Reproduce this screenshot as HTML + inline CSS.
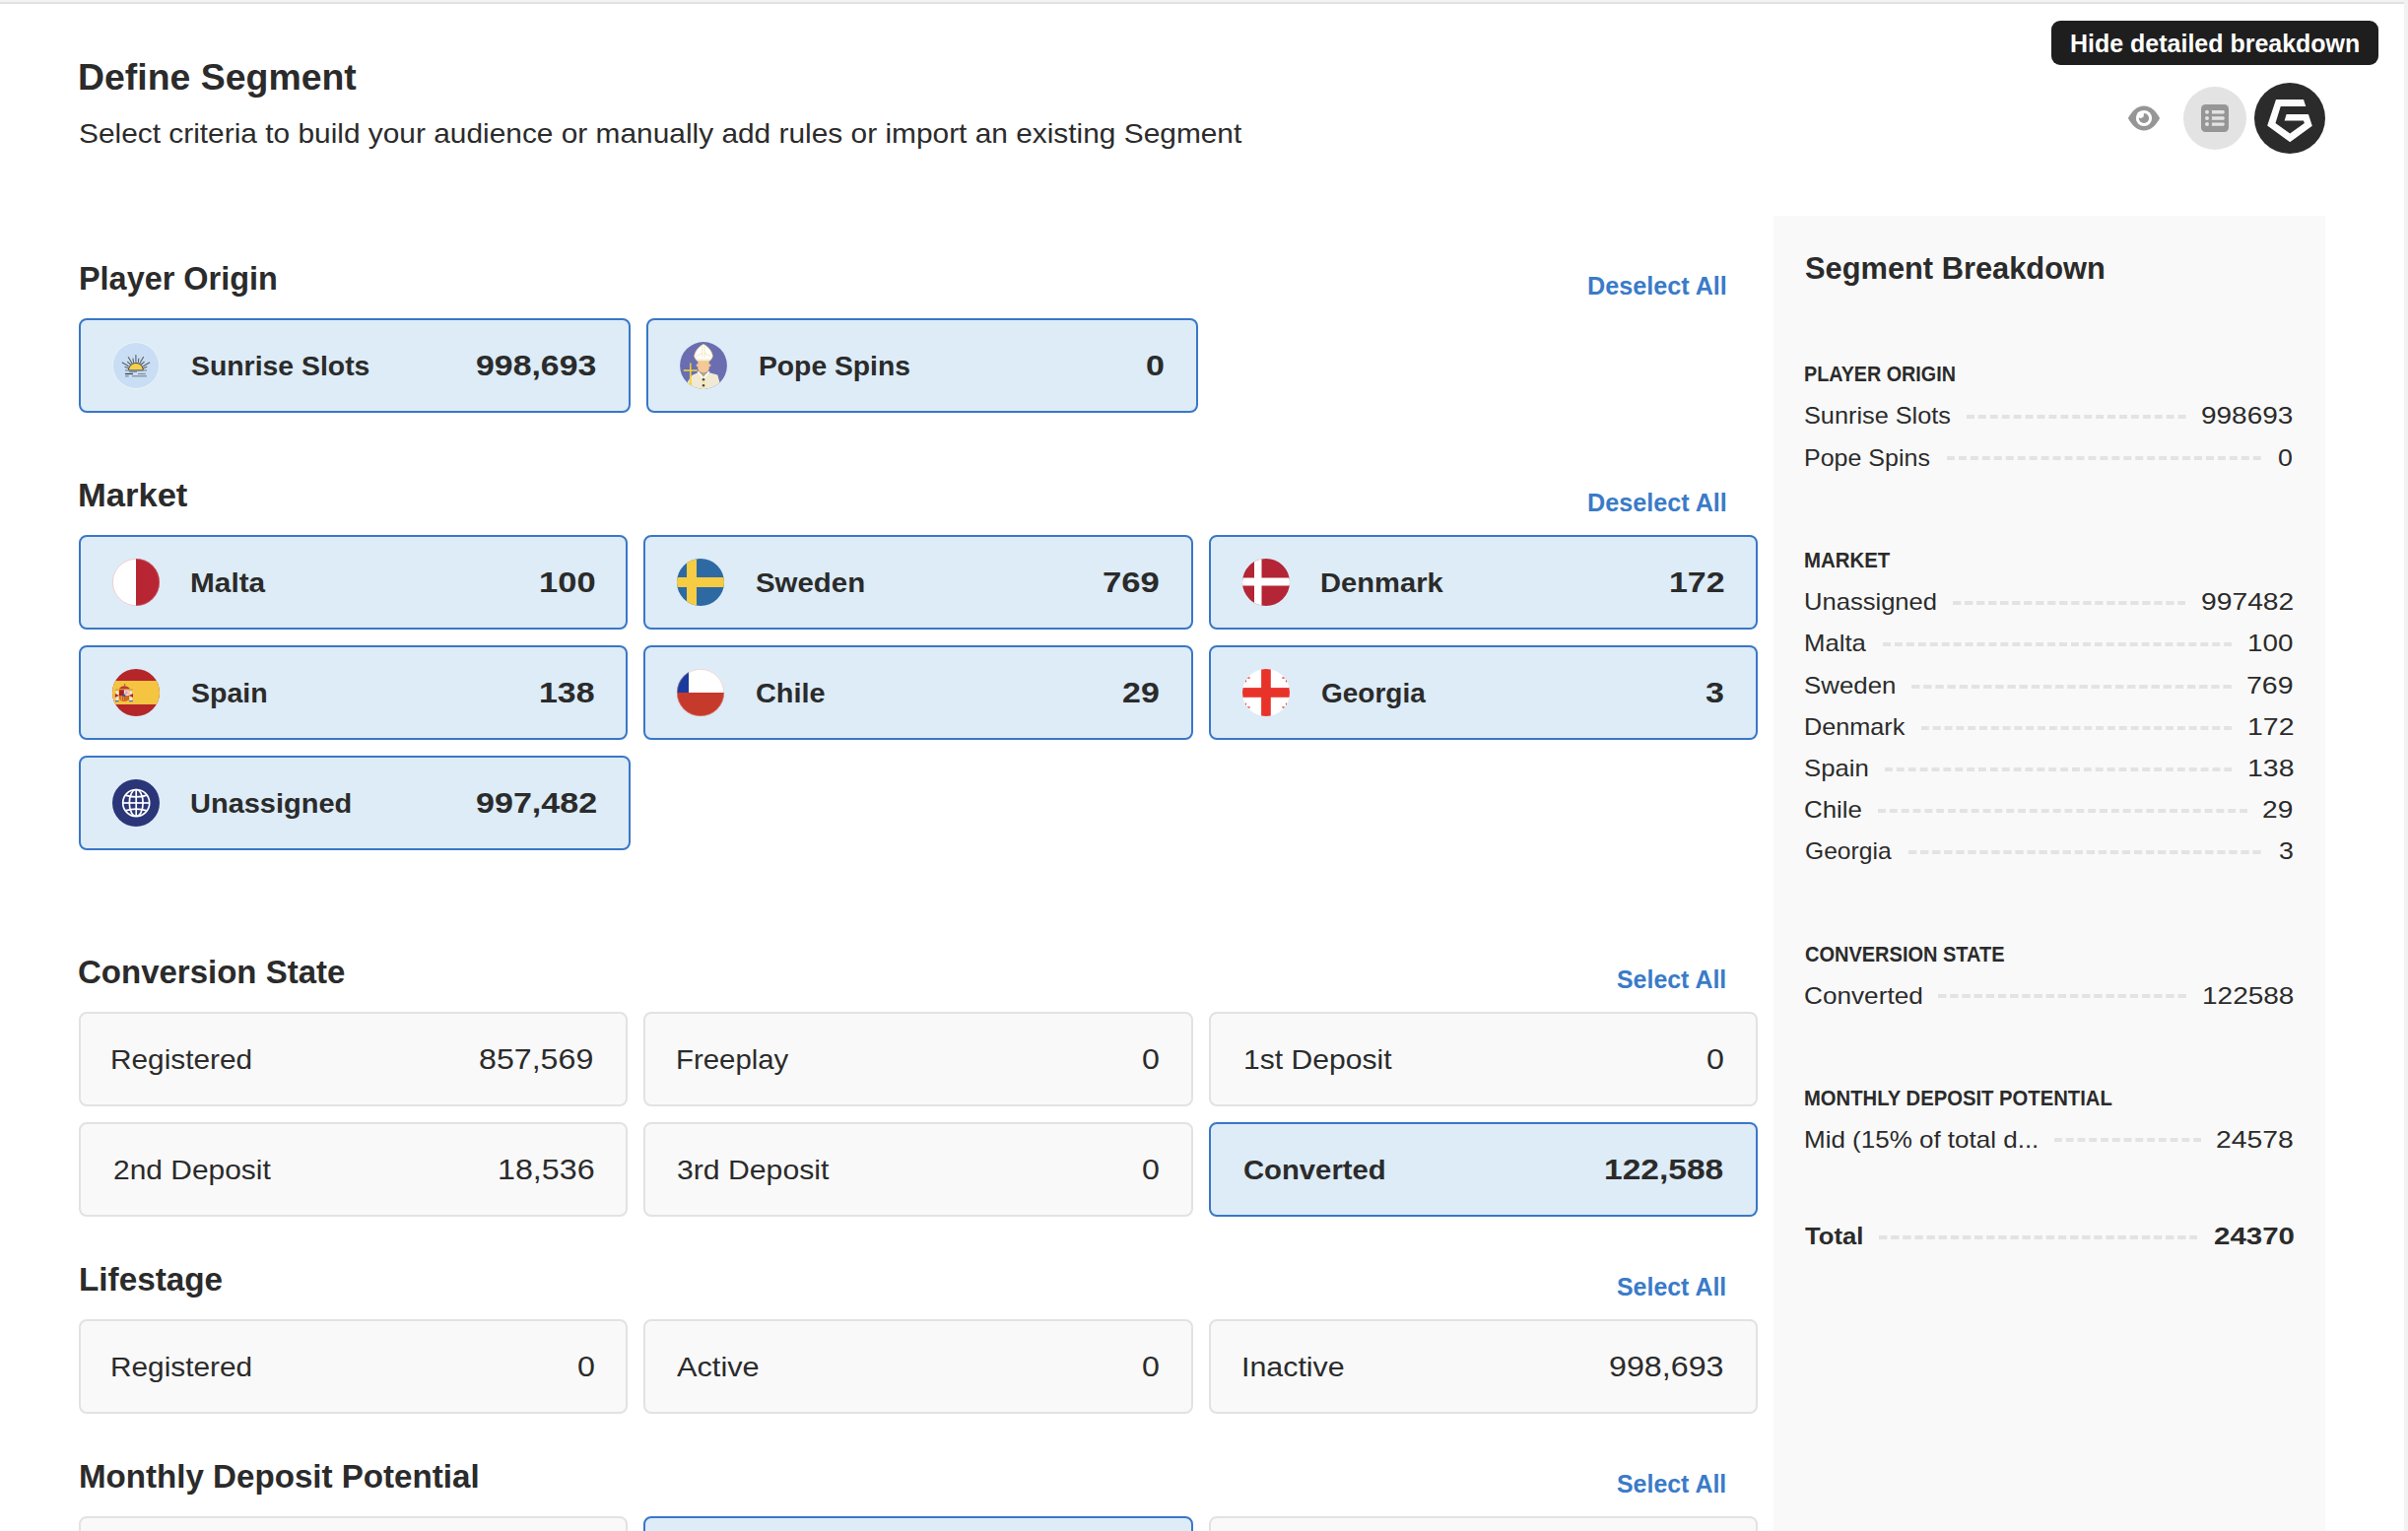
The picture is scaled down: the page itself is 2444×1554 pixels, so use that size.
<!DOCTYPE html>
<html><head><meta charset="utf-8"><title>Define Segment</title>
<style>
html,body{margin:0;padding:0;background:#ffffff;}
body{width:2444px;height:1554px;overflow:hidden;position:relative;font-family:"Liberation Sans", sans-serif;color:#2b2b2b;}
.t{position:absolute;white-space:nowrap;}
</style></head><body>
<div style="position:absolute;left:0px;top:0px;width:2444px;height:2px;box-sizing:border-box;background:#f3f3f3"></div>
<div style="position:absolute;left:0px;top:2px;width:2440px;height:2px;box-sizing:border-box;background:#e1e1e1"></div>
<div style="position:absolute;left:2440px;top:0px;width:4px;height:1554px;box-sizing:border-box;background:#f2f2f2"></div>
<div style="position:absolute;left:2082px;top:21px;width:332px;height:45px;box-sizing:border-box;background:#1e1e1e;border-radius:9px"></div>
<svg style="position:absolute;left:2160px;top:107px;overflow:visible" width="32" height="26" viewBox="0 0 32 26">
<path d="M-0.1 13 C4 5.6 9 0.5 16 0.5 C23 0.5 28 5.6 32.1 13 C28 20.4 23 25.4 16 25.4 C9 25.4 4 20.4 -0.1 13 Z" fill="#969696"/>
<circle cx="16" cy="13" r="8.1" fill="#ffffff"/>
<circle cx="16" cy="13" r="5.1" fill="#969696"/>
<circle cx="12.6" cy="9.6" r="3.3" fill="#ffffff"/>
</svg>
<div style="position:absolute;left:2216px;top:88px;width:64px;height:64px;box-sizing:border-box;background:#e3e3e3;border-radius:50%"></div>
<svg style="position:absolute;left:2234px;top:106px" width="28" height="28" viewBox="0 0 28 28">
<rect x="0" y="0" width="28" height="28" rx="4.5" fill="#969696"/>
<circle cx="6" cy="7.8" r="2" fill="#e3e3e3"/><circle cx="6" cy="14" r="2" fill="#e3e3e3"/><circle cx="6" cy="20.1" r="2" fill="#e3e3e3"/>
<path d="M10.6 6.1 H23 L24 7.8 L23 9.5 H10.6 L11.2 7.8 Z" fill="#e3e3e3"/>
<path d="M10.6 12.3 H23 L24 14 L23 15.7 H10.6 L11.2 14 Z" fill="#e3e3e3"/>
<path d="M10.6 18.4 H23 L24 20.1 L23 21.8 H10.6 L11.2 20.1 Z" fill="#e3e3e3"/>
</svg>
<svg style="position:absolute;left:2288px;top:84px" width="72" height="72" viewBox="0 0 72 72">
<circle cx="36" cy="36" r="36" fill="#2b2b2b"/>
<path d="M22 17 L50 17 L52.3 24.1 L26.75 24.1 L21.5 40.9 L36.2 51.4 L50.9 40.9 L49.9 38.5 L30.6 38.5 L32.6 32 L54.95 32 L58.8 43.8 L36.2 60.3 L13.2 43.5 Z" fill="#fcfcfc"/>
</svg>
<div style="position:absolute;left:1800px;top:219px;width:560px;height:1335px;box-sizing:border-box;background:#f9f9f9"></div>
<div style="position:absolute;left:1996.00px;top:421.20px;width:222.60px;height:4px;background-image:linear-gradient(to right,#e3e3e3 0,#e3e3e3 7.926px,transparent 7.926px);background-size:11.926px 4px;background-repeat:repeat-x"></div>
<div style="position:absolute;left:1975.70px;top:463.10px;width:318.90px;height:4px;background-image:linear-gradient(to right,#e3e3e3 0,#e3e3e3 7.959px,transparent 7.959px);background-size:11.959px 4px;background-repeat:repeat-x"></div>
<div style="position:absolute;left:1981.70px;top:609.60px;width:236.60px;height:4px;background-image:linear-gradient(to right,#e3e3e3 0,#e3e3e3 8.030px,transparent 8.030px);background-size:12.030px 4px;background-repeat:repeat-x"></div>
<div style="position:absolute;left:1910.70px;top:651.60px;width:354.60px;height:4px;background-image:linear-gradient(to right,#e3e3e3 0,#e3e3e3 7.953px,transparent 7.953px);background-size:11.953px 4px;background-repeat:repeat-x"></div>
<div style="position:absolute;left:1940.00px;top:694.60px;width:324.80px;height:4px;background-image:linear-gradient(to right,#e3e3e3 0,#e3e3e3 8.178px,transparent 8.178px);background-size:12.178px 4px;background-repeat:repeat-x"></div>
<div style="position:absolute;left:1950.30px;top:736.60px;width:315.00px;height:4px;background-image:linear-gradient(to right,#e3e3e3 0,#e3e3e3 7.815px,transparent 7.815px);background-size:11.815px 4px;background-repeat:repeat-x"></div>
<div style="position:absolute;left:1912.60px;top:778.60px;width:352.70px;height:4px;background-image:linear-gradient(to right,#e3e3e3 0,#e3e3e3 7.890px,transparent 7.890px);background-size:11.890px 4px;background-repeat:repeat-x"></div>
<div style="position:absolute;left:1905.70px;top:820.60px;width:375.10px;height:4px;background-image:linear-gradient(to right,#e3e3e3 0,#e3e3e3 7.847px,transparent 7.847px);background-size:11.847px 4px;background-repeat:repeat-x"></div>
<div style="position:absolute;left:1937.10px;top:862.60px;width:357.60px;height:4px;background-image:linear-gradient(to right,#e3e3e3 0,#e3e3e3 8.053px,transparent 8.053px);background-size:12.053px 4px;background-repeat:repeat-x"></div>
<div style="position:absolute;left:1967.30px;top:1009.20px;width:251.80px;height:4px;background-image:linear-gradient(to right,#e3e3e3 0,#e3e3e3 8.181px,transparent 8.181px);background-size:12.181px 4px;background-repeat:repeat-x"></div>
<div style="position:absolute;left:2084.80px;top:1155.00px;width:149.10px;height:4px;background-image:linear-gradient(to right,#e3e3e3 0,#e3e3e3 7.777px,transparent 7.777px);background-size:11.777px 4px;background-repeat:repeat-x"></div>
<div style="position:absolute;left:1906.90px;top:1254.00px;width:323.40px;height:4px;background-image:linear-gradient(to right,#e3e3e3 0,#e3e3e3 8.126px,transparent 8.126px);background-size:12.126px 4px;background-repeat:repeat-x"></div>
<div style="position:absolute;left:80px;top:323px;width:560px;height:96px;box-sizing:border-box;background:#ddecf7;border:2px solid #3a77c6;border-radius:8px"></div>
<div style="position:absolute;left:114px;top:347px;width:48px;height:48px"><svg width="48" height="48" viewBox="0 0 48 48"><circle cx="24" cy="24" r="24" fill="#e9f1f9"/><circle cx="24" cy="24" r="23.1" fill="#c9def4"/>
<g stroke="#56606a" stroke-width="1.1" stroke-linecap="round">
<line x1="23.9" y1="13.6" x2="23.9" y2="20"/><line x1="16.3" y1="15.5" x2="19.8" y2="21.5"/><line x1="31.5" y1="15.5" x2="28" y2="21.5"/>
<line x1="10.1" y1="21.1" x2="16.2" y2="24.6"/><line x1="37.7" y1="21.1" x2="31.6" y2="24.6"/>
<line x1="15.5" y1="20.4" x2="18.5" y2="23"/><line x1="32.3" y1="20.4" x2="29.3" y2="23"/>
<line x1="21" y1="17" x2="21.5" y2="20.5"/><line x1="26.8" y1="17" x2="26.3" y2="20.5"/>
<line x1="13" y1="25.4" x2="16" y2="26.4"/><line x1="34.8" y1="25.4" x2="31.8" y2="26.4"/>
</g>
<path d="M16.4 28.9 A7.5 7.5 0 0 1 31.4 28.9 Z" fill="#f6cf4c" stroke="#2f2f2f" stroke-width="0.9"/>
<g stroke="#7d8a96" stroke-width="1.2"><line x1="13" y1="28.9" x2="35" y2="28.9"/><line x1="17.3" y1="30.4" x2="25" y2="30.4"/>
<line x1="13" y1="32.5" x2="21" y2="32.5" stroke="#3b4148"/><line x1="26" y1="32.5" x2="33.8" y2="32.5"/>
<line x1="13" y1="34.8" x2="16.7" y2="34.8"/><line x1="20" y1="34.8" x2="35" y2="34.8"/></g></svg></div>
<div style="position:absolute;left:656px;top:323px;width:560px;height:96px;box-sizing:border-box;background:#ddecf7;border:2px solid #3a77c6;border-radius:8px"></div>
<div style="position:absolute;left:690px;top:347px;width:48px;height:48px"><svg width="48" height="48" viewBox="0 0 48 48"><defs><clipPath id="pc"><circle cx="24" cy="24" r="23.9"/></clipPath></defs>
<circle cx="24" cy="24" r="23.9" fill="#6a6eb0"/>
<g clip-path="url(#pc)">
<path d="M7.6 41 L12.2 34 L18.2 31.2 L24 33 L30 31.2 L38.3 33.6 L40.4 41 L42 50 L6 50 Z" fill="#f0ead3"/>
<path d="M17.6 30.6 L24 38.2 L30.4 30.6 L29.2 29.6 L24 35.6 L18.8 29.6 Z" fill="#ffffff"/>
<path d="M20.6 31.4 L27.4 31.4 L24 35.8 Z" fill="#b5a87c"/>
<rect x="22.2" y="36.4" width="3.6" height="13" fill="#f3e7b8"/>
<circle cx="24" cy="38.3" r="1.25" fill="#4a4a4a"/><circle cx="24" cy="44.3" r="1.25" fill="#4a4a4a"/>
<circle cx="18.1" cy="23.8" r="1.6" fill="#f0c08c"/><circle cx="29.9" cy="23.8" r="1.6" fill="#f0c08c"/>
<path d="M18.3 18.6 L29.7 18.6 L29.7 27.5 Q28.5 31.6 24 31.6 Q19.5 31.6 18.3 27.5 Z" fill="#f4c897"/>
<path d="M24 2.2 C28.5 4.6 32.6 9 33.4 14.3 C33 16.6 31.6 18.6 30.2 19.4 L17.8 19.4 C16.4 18.6 15 16.6 14.6 14.3 C15.4 9 19.5 4.6 24 2.2 Z" fill="#ffffff" stroke="#e5c75a" stroke-width="0.55"/>
<path d="M22.8 3.2 L22.8 15.6 M25.2 3.2 L25.2 15.6 M16.3 14.8 L22.8 11.2 M31.7 14.8 L25.2 11.2 M17 18 L31 18" stroke="#ead58a" stroke-width="0.55" fill="none"/>
<path d="M10.1 21.6 Q10.8 21.2 11.5 21.6 L11.7 40 L12.3 43.8 L9.3 43.8 L9.9 40 Z" fill="#f2d23c"/>
<path d="M3.5 28.9 Q4.2 27.8 6 28.2 L16.2 28.2 Q17.9 27.8 17.9 28.9 Q17.9 30 16.2 29.7 L6 29.7 Q4.2 30 3.5 28.9 Z" fill="#f5d63c"/>
</g></svg></div>
<div style="position:absolute;left:80px;top:543px;width:557px;height:96px;box-sizing:border-box;background:#ddecf7;border:2px solid #3a77c6;border-radius:8px"></div>
<div style="position:absolute;left:114px;top:567px;width:48px;height:48px"><svg width="48" height="48" viewBox="0 0 48 48"><defs><clipPath id="mc"><circle cx="24" cy="24" r="24"/></clipPath></defs><g clip-path="url(#mc)"><rect width="24" height="48" fill="#ffffff"/><rect x="24" width="24" height="48" fill="#b82633"/></g><circle cx="24" cy="24" r="23.6" fill="none" stroke="#d98a90" stroke-width="0.7" stroke-opacity="0.6"/></svg></div>
<div style="position:absolute;left:653px;top:543px;width:558px;height:96px;box-sizing:border-box;background:#ddecf7;border:2px solid #3a77c6;border-radius:8px"></div>
<div style="position:absolute;left:687px;top:567px;width:48px;height:48px"><svg width="48" height="48" viewBox="0 0 48 48"><defs><clipPath id="sc"><circle cx="24" cy="24" r="24"/></clipPath></defs><g clip-path="url(#sc)"><rect width="48" height="48" fill="#2d6aa4"/><rect x="10" width="10" height="48" fill="#f5cc43"/><rect y="19" width="48" height="10" fill="#f5cc43"/></g></svg></div>
<div style="position:absolute;left:1227px;top:543px;width:557px;height:96px;box-sizing:border-box;background:#ddecf7;border:2px solid #3a77c6;border-radius:8px"></div>
<div style="position:absolute;left:1261px;top:567px;width:48px;height:48px"><svg width="48" height="48" viewBox="0 0 48 48"><defs><clipPath id="dc"><circle cx="24" cy="24" r="24"/></clipPath></defs><g clip-path="url(#dc)"><rect width="48" height="48" fill="#b42535"/><rect x="12" width="7.5" height="48" fill="#ffffff"/><rect y="19.5" width="48" height="8" fill="#ffffff"/></g></svg></div>
<div style="position:absolute;left:80px;top:655px;width:557px;height:96px;box-sizing:border-box;background:#ddecf7;border:2px solid #3a77c6;border-radius:8px"></div>
<div style="position:absolute;left:114px;top:679px;width:48px;height:48px"><svg width="48" height="48" viewBox="0 0 48 48"><defs><clipPath id="spc"><circle cx="24" cy="24" r="24"/></clipPath></defs><g clip-path="url(#spc)"><rect width="48" height="48" fill="#b52629"/><rect y="12" width="48" height="24" fill="#f5c542"/>
<path d="M7.2 19.4 Q12 15 17.6 19.4 L17 21 L7.8 21 Z" fill="#c0392b"/><rect x="7.6" y="20.2" width="10" height="1.2" fill="#d9a441"/><rect x="12" y="15" width="1.2" height="2" fill="#8a7a4a"/>
<path d="M7 21.4 H16.8 V29.5 Q16.8 32.7 11.9 32.7 Q7 32.7 7 29.5 Z" fill="#c7352a"/>
<rect x="7" y="21.4" width="4.9" height="5.6" fill="#a8231f"/><rect x="11.9" y="21.4" width="4.9" height="5.6" fill="#f1e4e0"/><rect x="13.2" y="22.4" width="2.4" height="3.4" fill="#e69ab2"/>
<rect x="7.6" y="27.2" width="0.9" height="5" fill="#e8b53a"/><rect x="9.2" y="27.2" width="0.9" height="5" fill="#e8b53a"/><rect x="10.8" y="27.2" width="0.9" height="5" fill="#e8b53a"/>
<rect x="12.2" y="27" width="4.4" height="5" fill="#d2691e"/><ellipse cx="12" cy="26.8" rx="1.4" ry="1.5" fill="#2d5fb0"/>
<rect x="3.6" y="22" width="2.6" height="10" fill="#ede6dc"/><rect x="3" y="20.3" width="3.6" height="1.8" fill="#d9a441"/><path d="M2.8 25 L7 27 L2.8 29 Z" fill="#b52629"/><rect x="3" y="32" width="3.6" height="1.2" fill="#3b6cc0"/>
<rect x="17.6" y="22" width="2.6" height="10" fill="#ede6dc"/><rect x="17.2" y="20.3" width="3.6" height="1.8" fill="#d9a441"/><path d="M21 25 L16.8 27 L21 29 Z" fill="#b52629"/><rect x="17.2" y="32" width="3.6" height="1.2" fill="#3b6cc0"/>
</g></svg></div>
<div style="position:absolute;left:653px;top:655px;width:558px;height:96px;box-sizing:border-box;background:#ddecf7;border:2px solid #3a77c6;border-radius:8px"></div>
<div style="position:absolute;left:687px;top:679px;width:48px;height:48px"><svg width="48" height="48" viewBox="0 0 48 48"><defs><clipPath id="cc"><circle cx="24" cy="24" r="24"/></clipPath></defs><g clip-path="url(#cc)"><rect width="48" height="24" fill="#ffffff"/><rect y="24" width="48" height="24" fill="#c63a2c"/><rect width="12" height="24" fill="#1c3a9c"/><path d="M3 9.5 L4.3 10 L3.6 11 Z" fill="#fff"/></g><circle cx="24" cy="24" r="23.6" fill="none" stroke="#e0a098" stroke-width="0.7" stroke-opacity="0.6"/></svg></div>
<div style="position:absolute;left:1227px;top:655px;width:557px;height:96px;box-sizing:border-box;background:#ddecf7;border:2px solid #3a77c6;border-radius:8px"></div>
<div style="position:absolute;left:1261px;top:679px;width:48px;height:48px"><svg width="48" height="48" viewBox="0 0 48 48"><defs><clipPath id="gc"><circle cx="24" cy="24" r="24"/></clipPath></defs><g clip-path="url(#gc)"><rect width="48" height="48" fill="#ffffff"/><rect x="19.1" width="9.7" height="48" fill="#e8332a"/><rect y="19.1" width="48" height="9.7" fill="#e8332a"/>
<g fill="#e8332a"><path d="M2.60 4.80 L4.20 4.80 L3.80 8.60 L7.60 8.20 L7.60 9.80 L3.80 9.40 L4.20 13.20 L2.60 13.20 L3.00 9.40 L-0.80 9.80 L-0.80 8.20 L3.00 8.60 Z"/><path d="M43.80 4.80 L45.40 4.80 L45.00 8.60 L48.80 8.20 L48.80 9.80 L45.00 9.40 L45.40 13.20 L43.80 13.20 L44.20 9.40 L40.40 9.80 L40.40 8.20 L44.20 8.60 Z"/><path d="M2.60 34.80 L4.20 34.80 L3.80 38.60 L7.60 38.20 L7.60 39.80 L3.80 39.40 L4.20 43.20 L2.60 43.20 L3.00 39.40 L-0.80 39.80 L-0.80 38.20 L3.00 38.60 Z"/><path d="M43.80 34.80 L45.40 34.80 L45.00 38.60 L48.80 38.20 L48.80 39.80 L45.00 39.40 L45.40 43.20 L43.80 43.20 L44.20 39.40 L40.40 39.80 L40.40 38.20 L44.20 38.60 Z"/></g></g></svg></div>
<div style="position:absolute;left:80px;top:767px;width:560px;height:96px;box-sizing:border-box;background:#ddecf7;border:2px solid #3a77c6;border-radius:8px"></div>
<div style="position:absolute;left:114px;top:791px;width:48px;height:48px"><svg width="48" height="48" viewBox="0 0 48 48"><circle cx="24" cy="24" r="24" fill="#2b3679"/>
<g fill="none" stroke="#ffffff" stroke-width="1.7"><circle cx="24.2" cy="24" r="13.5"/><ellipse cx="24.2" cy="24" rx="6.9" ry="13.5"/><line x1="24.2" y1="10.5" x2="24.2" y2="37.5"/><line x1="10.7" y1="24" x2="37.7" y2="24"/><path d="M13.2 16.1 Q24.2 19.7 35.2 16.1 M13.2 31.9 Q24.2 28.3 35.2 31.9"/></g></svg></div>
<div style="position:absolute;left:80px;top:1027px;width:557px;height:96px;box-sizing:border-box;background:#f9f9f9;border:2px solid #e2e2e2;border-radius:8px"></div>
<div style="position:absolute;left:653px;top:1027px;width:558px;height:96px;box-sizing:border-box;background:#f9f9f9;border:2px solid #e2e2e2;border-radius:8px"></div>
<div style="position:absolute;left:1227px;top:1027px;width:557px;height:96px;box-sizing:border-box;background:#f9f9f9;border:2px solid #e2e2e2;border-radius:8px"></div>
<div style="position:absolute;left:80px;top:1139px;width:557px;height:96px;box-sizing:border-box;background:#f9f9f9;border:2px solid #e2e2e2;border-radius:8px"></div>
<div style="position:absolute;left:653px;top:1139px;width:558px;height:96px;box-sizing:border-box;background:#f9f9f9;border:2px solid #e2e2e2;border-radius:8px"></div>
<div style="position:absolute;left:1227px;top:1139px;width:557px;height:96px;box-sizing:border-box;background:#ddecf7;border:2px solid #3a77c6;border-radius:8px"></div>
<div style="position:absolute;left:80px;top:1339px;width:557px;height:96px;box-sizing:border-box;background:#f9f9f9;border:2px solid #e2e2e2;border-radius:8px"></div>
<div style="position:absolute;left:653px;top:1339px;width:558px;height:96px;box-sizing:border-box;background:#f9f9f9;border:2px solid #e2e2e2;border-radius:8px"></div>
<div style="position:absolute;left:1227px;top:1339px;width:557px;height:96px;box-sizing:border-box;background:#f9f9f9;border:2px solid #e2e2e2;border-radius:8px"></div>
<div style="position:absolute;left:80px;top:1539px;width:557px;height:96px;box-sizing:border-box;background:#f9f9f9;border:2px solid #e2e2e2;border-radius:8px"></div>
<div style="position:absolute;left:653px;top:1539px;width:558px;height:96px;box-sizing:border-box;background:#ddecf7;border:2px solid #3a77c6;border-radius:8px"></div>
<div style="position:absolute;left:1227px;top:1539px;width:557px;height:96px;box-sizing:border-box;background:#f9f9f9;border:2px solid #e2e2e2;border-radius:8px"></div>
<div class="t" style="left:79.40px;top:60.52px;font-size:36px;line-height:36px;font-weight:700;color:#2b2b2b;letter-spacing:0.000px;transform:scaleX(1.0394);transform-origin:0 0">Define Segment</div>
<div class="t" style="left:79.64px;top:122.29px;font-size:28px;line-height:28px;font-weight:400;color:#2b2b2b;letter-spacing:0.000px;transform:scaleX(1.0666);transform-origin:0 0">Select criteria to build your audience or manually add rules or import an existing Segment</div>
<div class="t" style="left:2100.80px;top:31.83px;font-size:25px;line-height:25px;font-weight:700;color:#ffffff;letter-spacing:0.000px;transform:scaleX(0.9993);transform-origin:0 0">Hide detailed breakdown</div>
<div class="t" style="left:79.65px;top:266.06px;font-size:33px;line-height:33px;font-weight:700;color:#2b2b2b;letter-spacing:0.000px;transform:scaleX(0.9821);transform-origin:0 0">Player Origin</div>
<div class="t" style="left:79.38px;top:486.06px;font-size:33px;line-height:33px;font-weight:700;color:#2b2b2b;letter-spacing:0.000px;transform:scaleX(1.0467);transform-origin:0 0">Market</div>
<div class="t" style="left:79.00px;top:970.06px;font-size:33px;line-height:33px;font-weight:700;color:#2b2b2b;letter-spacing:0.000px;transform:scaleX(1.0000);transform-origin:0 0">Conversion State</div>
<div class="t" style="left:80.47px;top:1282.06px;font-size:33px;line-height:33px;font-weight:700;color:#2b2b2b;letter-spacing:0.000px;transform:scaleX(1.0085);transform-origin:0 0">Lifestage</div>
<div class="t" style="left:79.89px;top:1482.06px;font-size:33px;line-height:33px;font-weight:700;color:#2b2b2b;letter-spacing:0.000px;transform:scaleX(1.0035);transform-origin:0 0">Monthly Deposit Potential</div>
<div class="t" style="left:1610.98px;top:277.83px;font-size:25px;line-height:25px;font-weight:700;color:#3a7bc8;letter-spacing:0.000px;transform:scaleX(1.0073);transform-origin:0 0">Deselect All</div>
<div class="t" style="left:1610.98px;top:497.83px;font-size:25px;line-height:25px;font-weight:700;color:#3a7bc8;letter-spacing:0.000px;transform:scaleX(1.0073);transform-origin:0 0">Deselect All</div>
<div class="t" style="left:1640.50px;top:981.83px;font-size:25px;line-height:25px;font-weight:700;color:#3a7bc8;letter-spacing:0.000px;transform:scaleX(0.9964);transform-origin:0 0">Select All</div>
<div class="t" style="left:1640.50px;top:1293.83px;font-size:25px;line-height:25px;font-weight:700;color:#3a7bc8;letter-spacing:0.000px;transform:scaleX(0.9964);transform-origin:0 0">Select All</div>
<div class="t" style="left:1640.50px;top:1493.83px;font-size:25px;line-height:25px;font-weight:700;color:#3a7bc8;letter-spacing:0.000px;transform:scaleX(0.9964);transform-origin:0 0">Select All</div>
<div class="t" style="left:194.48px;top:358.29px;font-size:28px;line-height:28px;font-weight:700;color:#2b2b2b;letter-spacing:0.000px;transform:scaleX(1.0136);transform-origin:0 0">Sunrise Slots</div>
<div class="t" style="left:483.33px;top:357.45px;font-size:29px;line-height:29px;font-weight:700;color:#2b2b2b;letter-spacing:0.000px;transform:scaleX(1.1671);transform-origin:0 0">998,693</div>
<div class="t" style="left:769.98px;top:358.29px;font-size:28px;line-height:28px;font-weight:700;color:#2b2b2b;letter-spacing:0.000px;transform:scaleX(1.0094);transform-origin:0 0">Pope Spins</div>
<div class="t" style="left:1163.05px;top:357.45px;font-size:29px;line-height:29px;font-weight:700;color:#2b2b2b;letter-spacing:0.000px;transform:scaleX(1.1738);transform-origin:0 0">0</div>
<div class="t" style="left:192.86px;top:578.29px;font-size:28px;line-height:28px;font-weight:700;color:#2b2b2b;letter-spacing:0.000px;transform:scaleX(1.0639);transform-origin:0 0">Malta</div>
<div class="t" style="left:547.17px;top:577.45px;font-size:29px;line-height:29px;font-weight:700;color:#2b2b2b;letter-spacing:0.000px;transform:scaleX(1.1898);transform-origin:0 0">100</div>
<div class="t" style="left:766.94px;top:578.29px;font-size:28px;line-height:28px;font-weight:700;color:#2b2b2b;letter-spacing:0.000px;transform:scaleX(1.0505);transform-origin:0 0">Sweden</div>
<div class="t" style="left:1119.23px;top:577.45px;font-size:29px;line-height:29px;font-weight:700;color:#2b2b2b;letter-spacing:0.000px;transform:scaleX(1.1961);transform-origin:0 0">769</div>
<div class="t" style="left:1340.39px;top:578.29px;font-size:28px;line-height:28px;font-weight:700;color:#2b2b2b;letter-spacing:0.000px;transform:scaleX(1.0411);transform-origin:0 0">Denmark</div>
<div class="t" style="left:1694.04px;top:577.45px;font-size:29px;line-height:29px;font-weight:700;color:#2b2b2b;letter-spacing:0.000px;transform:scaleX(1.1698);transform-origin:0 0">172</div>
<div class="t" style="left:193.97px;top:690.29px;font-size:28px;line-height:28px;font-weight:700;color:#2b2b2b;letter-spacing:0.000px;transform:scaleX(1.0193);transform-origin:0 0">Spain</div>
<div class="t" style="left:547.19px;top:689.45px;font-size:29px;line-height:29px;font-weight:700;color:#2b2b2b;letter-spacing:0.000px;transform:scaleX(1.1678);transform-origin:0 0">138</div>
<div class="t" style="left:766.97px;top:690.29px;font-size:28px;line-height:28px;font-weight:700;color:#2b2b2b;letter-spacing:0.000px;transform:scaleX(1.0304);transform-origin:0 0">Chile</div>
<div class="t" style="left:1139.27px;top:689.45px;font-size:29px;line-height:29px;font-weight:700;color:#2b2b2b;letter-spacing:0.000px;transform:scaleX(1.1709);transform-origin:0 0">29</div>
<div class="t" style="left:1341.49px;top:690.29px;font-size:28px;line-height:28px;font-weight:700;color:#2b2b2b;letter-spacing:0.000px;transform:scaleX(1.0001);transform-origin:0 0">Georgia</div>
<div class="t" style="left:1731.00px;top:689.45px;font-size:29px;line-height:29px;font-weight:700;color:#2b2b2b;letter-spacing:0.000px;transform:scaleX(1.1738);transform-origin:0 0">3</div>
<div class="t" style="left:192.93px;top:802.29px;font-size:28px;line-height:28px;font-weight:700;color:#2b2b2b;letter-spacing:0.000px;transform:scaleX(1.0349);transform-origin:0 0">Unassigned</div>
<div class="t" style="left:483.29px;top:801.45px;font-size:29px;line-height:29px;font-weight:700;color:#2b2b2b;letter-spacing:0.000px;transform:scaleX(1.1746);transform-origin:0 0">997,482</div>
<div class="t" style="left:111.86px;top:1062.29px;font-size:28px;line-height:28px;font-weight:400;color:#2b2b2b;letter-spacing:0.000px;transform:scaleX(1.0641);transform-origin:0 0">Registered</div>
<div class="t" style="left:486.29px;top:1061.45px;font-size:29px;line-height:29px;font-weight:400;color:#2b2b2b;letter-spacing:0.000px;transform:scaleX(1.1091);transform-origin:0 0">857,569</div>
<div class="t" style="left:686.38px;top:1062.29px;font-size:28px;line-height:28px;font-weight:400;color:#2b2b2b;letter-spacing:0.000px;transform:scaleX(1.0491);transform-origin:0 0">Freeplay</div>
<div class="t" style="left:1158.89px;top:1061.45px;font-size:29px;line-height:29px;font-weight:400;color:#2b2b2b;letter-spacing:0.000px;transform:scaleX(1.1094);transform-origin:0 0">0</div>
<div class="t" style="left:1262.30px;top:1062.29px;font-size:28px;line-height:28px;font-weight:400;color:#2b2b2b;letter-spacing:0.000px;transform:scaleX(1.0745);transform-origin:0 0">1st Deposit</div>
<div class="t" style="left:1731.97px;top:1061.45px;font-size:29px;line-height:29px;font-weight:400;color:#2b2b2b;letter-spacing:0.000px;transform:scaleX(1.1094);transform-origin:0 0">0</div>
<div class="t" style="left:114.86px;top:1174.29px;font-size:28px;line-height:28px;font-weight:400;color:#2b2b2b;letter-spacing:0.000px;transform:scaleX(1.0694);transform-origin:0 0">2nd Deposit</div>
<div class="t" style="left:505.25px;top:1173.45px;font-size:29px;line-height:29px;font-weight:400;color:#2b2b2b;letter-spacing:0.000px;transform:scaleX(1.1121);transform-origin:0 0">18,536</div>
<div class="t" style="left:687.40px;top:1174.29px;font-size:28px;line-height:28px;font-weight:400;color:#2b2b2b;letter-spacing:0.000px;transform:scaleX(1.0780);transform-origin:0 0">3rd Deposit</div>
<div class="t" style="left:1158.89px;top:1173.45px;font-size:29px;line-height:29px;font-weight:400;color:#2b2b2b;letter-spacing:0.000px;transform:scaleX(1.1094);transform-origin:0 0">0</div>
<div class="t" style="left:1261.95px;top:1174.29px;font-size:28px;line-height:28px;font-weight:700;color:#2b2b2b;letter-spacing:0.000px;transform:scaleX(1.0445);transform-origin:0 0">Converted</div>
<div class="t" style="left:1628.15px;top:1173.45px;font-size:29px;line-height:29px;font-weight:700;color:#2b2b2b;letter-spacing:0.000px;transform:scaleX(1.1567);transform-origin:0 0">122,588</div>
<div class="t" style="left:111.86px;top:1374.29px;font-size:28px;line-height:28px;font-weight:400;color:#2b2b2b;letter-spacing:0.000px;transform:scaleX(1.0641);transform-origin:0 0">Registered</div>
<div class="t" style="left:585.91px;top:1373.45px;font-size:29px;line-height:29px;font-weight:400;color:#2b2b2b;letter-spacing:0.000px;transform:scaleX(1.1094);transform-origin:0 0">0</div>
<div class="t" style="left:687.47px;top:1374.29px;font-size:28px;line-height:28px;font-weight:400;color:#2b2b2b;letter-spacing:0.000px;transform:scaleX(1.0974);transform-origin:0 0">Active</div>
<div class="t" style="left:1158.89px;top:1373.45px;font-size:29px;line-height:29px;font-weight:400;color:#2b2b2b;letter-spacing:0.000px;transform:scaleX(1.1094);transform-origin:0 0">0</div>
<div class="t" style="left:1259.74px;top:1374.29px;font-size:28px;line-height:28px;font-weight:400;color:#2b2b2b;letter-spacing:0.000px;transform:scaleX(1.0848);transform-origin:0 0">Inactive</div>
<div class="t" style="left:1633.25px;top:1373.45px;font-size:29px;line-height:29px;font-weight:400;color:#2b2b2b;letter-spacing:0.000px;transform:scaleX(1.1110);transform-origin:0 0">998,693</div>
<div class="t" style="left:1831.93px;top:255.91px;font-size:32px;line-height:32px;font-weight:700;color:#2b2b2b;letter-spacing:0.000px;transform:scaleX(0.9629);transform-origin:0 0">Segment Breakdown</div>
<div class="t" style="left:1831.09px;top:369.37px;font-size:22px;line-height:22px;font-weight:700;color:#2b2b2b;letter-spacing:0.000px;transform:scaleX(0.8971);transform-origin:0 0">PLAYER ORIGIN</div>
<div class="t" style="left:1831.03px;top:558.37px;font-size:22px;line-height:22px;font-weight:700;color:#2b2b2b;letter-spacing:0.000px;transform:scaleX(0.9273);transform-origin:0 0">MARKET</div>
<div class="t" style="left:1831.64px;top:958.37px;font-size:22px;line-height:22px;font-weight:700;color:#2b2b2b;letter-spacing:0.000px;transform:scaleX(0.9091);transform-origin:0 0">CONVERSION STATE</div>
<div class="t" style="left:1830.63px;top:1104.37px;font-size:22px;line-height:22px;font-weight:700;color:#2b2b2b;letter-spacing:0.000px;transform:scaleX(0.9204);transform-origin:0 0">MONTHLY DEPOSIT POTENTIAL</div>
<div class="t" style="left:1831.42px;top:409.68px;font-size:24px;line-height:24px;font-weight:400;color:#2b2b2b;letter-spacing:0.000px;transform:scaleX(1.0533);transform-origin:0 0">Sunrise Slots</div>
<div class="t" style="left:2234.29px;top:409.68px;font-size:24px;line-height:24px;font-weight:400;color:#2b2b2b;letter-spacing:0.000px;transform:scaleX(1.1656);transform-origin:0 0">998693</div>
<div class="t" style="left:1831.39px;top:452.68px;font-size:24px;line-height:24px;font-weight:400;color:#2b2b2b;letter-spacing:0.000px;transform:scaleX(1.0421);transform-origin:0 0">Pope Spins</div>
<div class="t" style="left:2312.19px;top:452.68px;font-size:24px;line-height:24px;font-weight:400;color:#2b2b2b;letter-spacing:0.000px;transform:scaleX(1.1152);transform-origin:0 0">0</div>
<div class="t" style="left:1831.34px;top:598.68px;font-size:24px;line-height:24px;font-weight:400;color:#2b2b2b;letter-spacing:0.000px;transform:scaleX(1.0650);transform-origin:0 0">Unassigned</div>
<div class="t" style="left:2234.24px;top:598.68px;font-size:24px;line-height:24px;font-weight:400;color:#2b2b2b;letter-spacing:0.000px;transform:scaleX(1.1769);transform-origin:0 0">997482</div>
<div class="t" style="left:1831.32px;top:640.68px;font-size:24px;line-height:24px;font-weight:400;color:#2b2b2b;letter-spacing:0.000px;transform:scaleX(1.0714);transform-origin:0 0">Malta</div>
<div class="t" style="left:2281.07px;top:640.68px;font-size:24px;line-height:24px;font-weight:400;color:#2b2b2b;letter-spacing:0.000px;transform:scaleX(1.1586);transform-origin:0 0">100</div>
<div class="t" style="left:1831.39px;top:683.68px;font-size:24px;line-height:24px;font-weight:400;color:#2b2b2b;letter-spacing:0.000px;transform:scaleX(1.0765);transform-origin:0 0">Sweden</div>
<div class="t" style="left:2280.28px;top:683.68px;font-size:24px;line-height:24px;font-weight:400;color:#2b2b2b;letter-spacing:0.000px;transform:scaleX(1.1881);transform-origin:0 0">769</div>
<div class="t" style="left:1831.37px;top:725.68px;font-size:24px;line-height:24px;font-weight:400;color:#2b2b2b;letter-spacing:0.000px;transform:scaleX(1.0513);transform-origin:0 0">Denmark</div>
<div class="t" style="left:2281.02px;top:725.68px;font-size:24px;line-height:24px;font-weight:400;color:#2b2b2b;letter-spacing:0.000px;transform:scaleX(1.1856);transform-origin:0 0">172</div>
<div class="t" style="left:1831.39px;top:767.68px;font-size:24px;line-height:24px;font-weight:400;color:#2b2b2b;letter-spacing:0.000px;transform:scaleX(1.0725);transform-origin:0 0">Spain</div>
<div class="t" style="left:2281.02px;top:767.68px;font-size:24px;line-height:24px;font-weight:400;color:#2b2b2b;letter-spacing:0.000px;transform:scaleX(1.1856);transform-origin:0 0">138</div>
<div class="t" style="left:1831.38px;top:809.68px;font-size:24px;line-height:24px;font-weight:400;color:#2b2b2b;letter-spacing:0.000px;transform:scaleX(1.0773);transform-origin:0 0">Chile</div>
<div class="t" style="left:2296.34px;top:809.68px;font-size:24px;line-height:24px;font-weight:400;color:#2b2b2b;letter-spacing:0.000px;transform:scaleX(1.1722);transform-origin:0 0">29</div>
<div class="t" style="left:1832.46px;top:851.68px;font-size:24px;line-height:24px;font-weight:400;color:#2b2b2b;letter-spacing:0.000px;transform:scaleX(1.0263);transform-origin:0 0">Georgia</div>
<div class="t" style="left:2313.26px;top:851.68px;font-size:24px;line-height:24px;font-weight:400;color:#2b2b2b;letter-spacing:0.000px;transform:scaleX(1.1152);transform-origin:0 0">3</div>
<div class="t" style="left:1831.37px;top:998.68px;font-size:24px;line-height:24px;font-weight:400;color:#2b2b2b;letter-spacing:0.000px;transform:scaleX(1.0909);transform-origin:0 0">Converted</div>
<div class="t" style="left:2235.20px;top:998.68px;font-size:24px;line-height:24px;font-weight:400;color:#2b2b2b;letter-spacing:0.000px;transform:scaleX(1.1665);transform-origin:0 0">122588</div>
<div class="t" style="left:1831.29px;top:1144.68px;font-size:24px;line-height:24px;font-weight:400;color:#2b2b2b;letter-spacing:0.000px;transform:scaleX(1.0828);transform-origin:0 0">Mid (15% of total d...</div>
<div class="t" style="left:2249.32px;top:1144.68px;font-size:24px;line-height:24px;font-weight:400;color:#2b2b2b;letter-spacing:0.000px;transform:scaleX(1.1792);transform-origin:0 0">24578</div>
<div class="t" style="left:1832.47px;top:1242.68px;font-size:24px;line-height:24px;font-weight:700;color:#2b2b2b;letter-spacing:0.000px;transform:scaleX(1.0681);transform-origin:0 0">Total</div>
<div class="t" style="left:2247.15px;top:1242.68px;font-size:24px;line-height:24px;font-weight:700;color:#2b2b2b;letter-spacing:0.000px;transform:scaleX(1.2286);transform-origin:0 0">24370</div>
</body></html>
